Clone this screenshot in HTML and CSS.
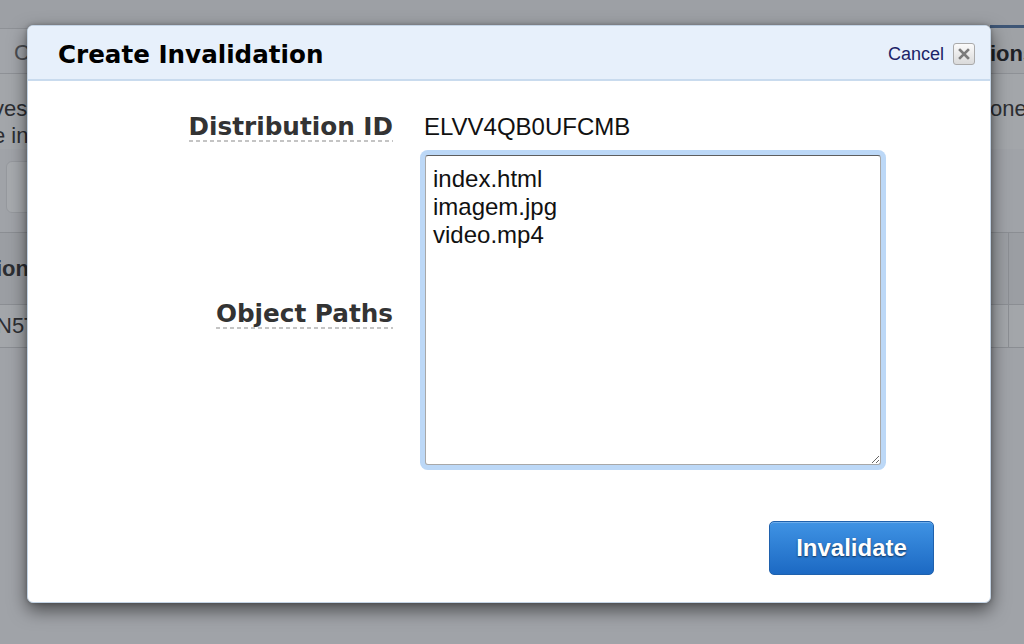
FILE: index.html
```html
<!DOCTYPE html>
<html>
<head>
<meta charset="utf-8">
<link rel="stylesheet" href="styles.css">
</head>
<body>
<div class="page">
  <div class="topbar"></div>
  <div class="tabs">
    <div class="tab">C</div>
    <div class="tab active">ions</div>
  </div>
  <div class="intro">
    <div class="line"><span class="l">ves</span><span class="r">one</span></div>
    <div class="line"><span class="l">e in</span><span class="r"></span></div>
  </div>
  <div class="toolbox"></div>
  <div class="table">
    <div class="trow thead"><span class="c1">ion</span><span class="c2"></span></div>
    <div class="trow tdata"><span class="c1">N5T</span><span class="c2"></span></div>
  </div>
</div>

<div class="dialog">
  <div class="dhead">
    <div class="dtitle">Create Invalidation</div>
    <div class="dclose">
      <span class="cancel">Cancel</span>
      <span class="xbtn"><svg width="12" height="12" viewBox="0 0 12 12"><path d="M2 2 L10 10 M10 2 L2 10" stroke="#7b7b7b" stroke-width="2.6" stroke-linecap="square"/></svg></span>
    </div>
  </div>
  <div class="dbody">
    <div class="form">
      <div class="label r1"><span class="ltext">Distribution ID</span></div>
      <div class="value r1">ELVV4QB0UFCMB</div>
      <div class="label r2"><span class="ltext">Object Paths</span></div>
      <div class="field r2"><textarea class="paths" spellcheck="false">index.html
imagem.jpg
video.mp4</textarea></div>
    </div>
    <div class="footer">
      <button class="invalidate">Invalidate</button>
    </div>
  </div>
</div>
</body>
</html>
```
FILE: styles.css
```css
html, body {
  margin: 0;
  padding: 0;
}
body {
  width: 1024px;
  height: 644px;
  overflow: hidden;
  position: relative;
  background: #a0a3a8;
  font-family: "Liberation Sans", Arial, sans-serif;
}

/* dimmed page behind the dialog */
.page {
  display: flex;
  flex-direction: column;
  height: 644px;
  overflow: hidden;
}
.topbar {
  height: 28px;
  background: #9da0a5;
}
.tabs {
  height: 44px;
  display: grid;
  grid-template-columns: 990px 1fr;
  border-top: 1px solid #8e9196;
  border-bottom: 1px solid #8e9196;
  background: #a2a5aa;
}
.tab {
  display: flex;
  align-items: center;
  padding-left: 14px;
  padding-top: 4px;
  font-size: 22px;
  color: #4b4d52;
  white-space: nowrap;
  overflow: hidden;
}
.tab.active {
  padding-left: 0;
  padding-top: 6px;
  margin-top: -4px;
  border-top: 3px solid #3e5676;
  font-weight: bold;
  color: #1f2226;
  background: #9fa2a6;
}
.intro {
  padding-top: 21px;
  background: #a3a6aa;
}
.line {
  display: grid;
  grid-template-columns: 990px 1fr;
  white-space: nowrap;
  overflow: hidden;
  font-size: 22px;
  line-height: 27px;
  color: #2c2e32;
}
.line .l {
  margin-left: -7px;
}
.line .r {
  overflow: hidden;
}
.toolbox {
  margin: 12px 0 0 6px;
  width: 300px;
  height: 52px;
  box-sizing: border-box;
  border: 1px solid #96999e;
  border-radius: 6px;
  background: #a7aaae;
}
.table {
  margin-top: 19px;
  border-top: 1px solid #8b8e93;
}
.trow {
  display: grid;
  grid-template-columns: 1008px 1fr;
  align-items: stretch;
  border-bottom: 1px solid #8b8e93;
  font-size: 22px;
  color: #2c2e32;
}
.trow .c1 {
  display: flex;
  align-items: center;
  margin-left: -4px;
}
.trow .c2 {
  border-left: 1px solid #8b8e93;
}
.thead {
  height: 71px;
  background: #9b9ea3;
  font-weight: bold;
}
.tdata {
  height: 42px;
  background: #a3a6aa;
}

/* dialog */
.dialog {
  position: absolute;
  left: 27px;
  top: 25px;
  width: 964px;
  height: 578px;
  box-sizing: border-box;
  background: #ffffff;
  border: 1px solid #c3d3e4;
  border-radius: 6px;
  box-shadow: 0 7px 18px rgba(0, 0, 0, 0.55), 0 0 4px rgba(0, 0, 0, 0.25);
  display: flex;
  flex-direction: column;
  overflow: hidden;
}
.dhead {
  height: 55px;
  flex: none;
  box-sizing: border-box;
  background: #e7f0fb;
  border-bottom: 2px solid #c9dbee;
  display: flex;
  align-items: center;
  justify-content: space-between;
  padding: 3px 15px 0 30px;
}
.dtitle {
  font-family: "DejaVu Sans", Verdana, sans-serif;
  font-weight: bold;
  font-size: 24.6px;
  color: #000;
}
.dclose {
  display: flex;
  align-items: center;
  gap: 9px;
}
.cancel {
  font-size: 18px;
  color: #1b2367;
}
.xbtn {
  width: 22px;
  height: 22px;
  box-sizing: border-box;
  border: 1px solid #aaaaaa;
  border-radius: 3px;
  background: linear-gradient(#fbfbfb, #dadada);
  display: flex;
  align-items: center;
  justify-content: center;
}
.dbody {
  flex: 1;
  display: flex;
  flex-direction: column;
}
.form {
  margin-top: 31px;
  display: grid;
  grid-template-columns: 365px 1fr;
  column-gap: 31px;
  row-gap: 13px;
}
.label {
  text-align: right;
}
.ltext {
  display: inline-block;
  font-family: "DejaVu Sans", Verdana, sans-serif;
  font-weight: bold;
  font-size: 24.7px;
  line-height: 30px;
  color: #333333;
  background-image: linear-gradient(to right, #c4c4c4 55%, transparent 55%);
  background-size: 7px 2px;
  background-repeat: repeat-x;
  background-position: left bottom;
}
.r1 {
  align-self: baseline;
}
.value {
  font-size: 24px;
  line-height: 30px;
  color: #111;
}
.label.r2 {
  align-self: center;
  margin-top: 8px;
}
.field {
  padding-left: 1px;
}
.paths {
  display: block;
  width: 456px;
  height: 310px;
  box-sizing: border-box;
  margin: 0;
  padding: 9px 7px 6px;
  border: 1px solid #a8a8a8;
  border-top-color: #5e5e5e;
  border-radius: 3px;
  box-shadow: 0 0 0 5px #bcd8f7;
  outline: none;
  font-family: "Liberation Sans", Arial, sans-serif;
  font-size: 24px;
  line-height: 28px;
  color: #111;
  background: #fff;
}
.footer {
  margin-top: auto;
  display: flex;
  justify-content: flex-end;
  padding: 0 56px 27px 0;
}
.invalidate {
  width: 165px;
  height: 54px;
  border: 1px solid #1f61ad;
  border-radius: 5px;
  background: linear-gradient(#3f93e4, #1c69c3);
  box-shadow: inset 0 1px 0 rgba(255, 255, 255, 0.25);
  color: #fff;
  font-family: "Liberation Sans", Arial, sans-serif;
  font-weight: bold;
  font-size: 24px;
  text-shadow: 0 1px 2px rgba(0, 0, 0, 0.6);
  padding: 0;
  cursor: pointer;
}
```
